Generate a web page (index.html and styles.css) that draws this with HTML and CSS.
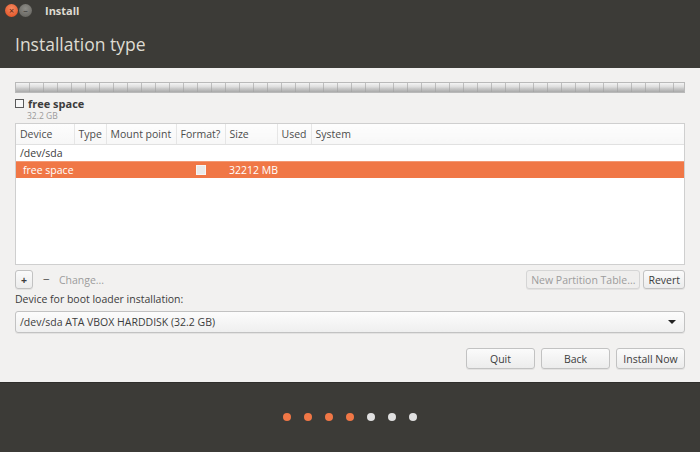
FILE: index.html
```html
<!DOCTYPE html>
<html lang="en">
<head>
    <meta charset="UTF-8">
    <title>Install</title>
    <link rel="stylesheet" href="styles.css">
</head>
<body>
    <div class="window">
        <header class="titlebar">
            <span class="wbtn close">&#215;</span>
            <span class="wbtn mini">&#8211;</span>
            <span class="wtitle">Install</span>
        </header>

        <div class="pagehead">Installation type</div>

        <main class="main">
            <div class="partbar"></div>

            <div class="legend">
                <div class="legend-name"><span class="box"></span>free space</div>
                <div class="legend-size">32.2 GB</div>
            </div>

            <div class="tablebox">
                <table class="parts">
                    <thead>
                        <tr>
                            <th class="c-dev">Device</th>
                            <th class="c-type">Type</th>
                            <th class="c-mount">Mount point</th>
                            <th class="c-fmt">Format?</th>
                            <th class="c-size">Size</th>
                            <th class="c-used">Used</th>
                            <th class="c-sys">System</th>
                        </tr>
                    </thead>
                    <tbody>
                        <tr>
                            <td>/dev/sda</td>
                            <td></td><td></td><td></td><td></td><td></td><td></td>
                        </tr>
                        <tr class="selected">
                            <td class="indent">free space</td>
                            <td></td>
                            <td></td>
                            <td class="fmt"><span class="fmtbox"></span></td>
                            <td>32212 MB</td>
                            <td></td>
                            <td></td>
                        </tr>
                    </tbody>
                </table>
            </div>

            <div class="toolbar">
                <button class="btn small">+</button>
                <span class="minus">&#8722;</span>
                <span class="change">Change...</span>
                <span class="spacer"></span>
                <button class="btn disabled">New Partition Table...</button>
                <button class="btn">Revert</button>
            </div>

            <div class="bootlabel">Device for boot loader installation:</div>
            <div class="combo">
                <span>/dev/sda ATA VBOX HARDDISK (32.2 GB)</span>
                <span class="arrow"></span>
            </div>

            <div class="actions">
                <button class="btn wide">Quit</button>
                <button class="btn wide">Back</button>
                <button class="btn wide">Install Now</button>
            </div>
        </main>

        <footer class="footer">
            <span class="dot on"></span>
            <span class="dot on"></span>
            <span class="dot on"></span>
            <span class="dot on"></span>
            <span class="dot"></span>
            <span class="dot"></span>
            <span class="dot"></span>
        </footer>
    </div>
</body>
</html>
```

FILE: styles.css
```css
* {
    margin: 0;
    padding: 0;
    box-sizing: border-box;
}

body {
    font-family: "Open Sans", "DejaVu Sans", sans-serif;
    font-size: 10.5px;
    color: #3c3c3c;
    background-color: #3c3b37;
}

.window {
    width: 700px;
    height: 452px;
    display: flex;
    flex-direction: column;
}

/* title bar */
.titlebar {
    height: 20px;
    display: flex;
    align-items: center;
    padding-left: 5px;
    background-color: #3c3b37;
}

.wbtn {
    width: 13px;
    height: 13px;
    border-radius: 50%;
    display: flex;
    align-items: center;
    justify-content: center;
    font-size: 9px;
    line-height: 1;
    margin-right: 1px;
}

.wbtn.close {
    background: radial-gradient(circle at 50% 35%, #f58a62, #df4a1b);
    color: #5a2410;
}

.wbtn.mini {
    background: radial-gradient(circle at 50% 35%, #8e8d88, #5f5e59);
    color: #3c3b37;
}

.wtitle {
    margin-left: 12px;
    color: #dfdbd2;
    font-weight: bold;
    font-size: 11px;
}

/* page header */
.pagehead {
    height: 48px;
    padding: 12px 0 0 15px;
    color: #dfdbd2;
    font-size: 17.5px;
    background-color: #3c3b37;
}

/* main area */
.main {
    height: 314px;
    background-color: #f2f1f0;
    padding: 14px 15px 0;
    display: flex;
    flex-direction: column;
}

.partbar {
    height: 11px;
    border: 1px solid #b9b9b9;
    background:
        repeating-linear-gradient(90deg, transparent 0, transparent 13px, rgba(160,160,160,0.6) 13px, rgba(160,160,160,0.6) 14px),
        linear-gradient(#f4f4f4, #dcdcdc 45%, #cfcfcf 55%, #a9a9a9);
}

.legend {
    margin-top: 4px;
    height: 26px;
}

.legend-name {
    display: flex;
    align-items: center;
    height: 13px;
    font-weight: bold;
    font-size: 11px;
    color: #3c3c3c;
    line-height: 13px;
}

.legend-name .box {
    width: 9px;
    height: 9px;
    border: 1px solid #5a5a5a;
    background-color: #f7f7f7;
    margin-right: 4px;
}

.legend-size {
    margin-top: 1px;
    padding-left: 12px;
    font-size: 8.5px;
    color: #9a9a9a;
    line-height: 10px;
}

.tablebox {
    height: 142px;
    background-color: #fff;
    border: 1px solid #cfcfcf;
}

.parts {
    width: 100%;
    border-collapse: collapse;
    table-layout: fixed;
}

.parts th {
    height: 20px;
    font-weight: normal;
    text-align: left;
    padding: 0 4px;
    white-space: nowrap;
    overflow: hidden;
    color: #4c4c4c;
    background: linear-gradient(#fdfdfd, #f7f7f7);
    border-bottom: 1px solid #e1e1e1;
    border-right: 1px solid #e6e6e6;
}

.parts th.c-sys {
    border-right: none;
}

.c-dev { width: 58px; }
.c-type { width: 32px; }
.c-mount { width: 70px; }
.c-fmt { width: 49px; }
.c-size { width: 52px; }
.c-used { width: 34px; }

.parts td {
    height: 17px;
    padding: 0 4px;
    color: #3c3c3c;
    white-space: nowrap;
}

.parts tr.selected td {
    background-color: #f07746;
    color: #fff;
    border-top: 1px solid #f39873;
}

.parts td.indent {
    padding-left: 7px;
}

.parts td.fmt {
    text-align: center;
    padding-top: 2px;
}

.fmtbox {
    display: inline-block;
    width: 10px;
    height: 10px;
    background-color: #eaeaea;
    border: 1px solid #f5f5f5;
}

/* toolbar under table */
.toolbar {
    margin-top: 5px;
    height: 19px;
    display: flex;
    align-items: center;
}

.btn {
    font-family: inherit;
    font-size: 10.5px;
    height: 19px;
    padding: 0 4px;
    color: #3c3c3c;
    border: 1px solid #c2c2c2;
    border-radius: 3px;
    background: linear-gradient(#fbfbfb, #ececec);
    box-shadow: 0 1px 0 rgba(0,0,0,0.06);
}

.btn.small {
    width: 18px;
    padding: 0;
    font-weight: bold;
}

.btn.disabled {
    color: #9c9c9c;
    background: #efeeed;
    border-color: #d5d5d5;
    margin-right: 3px;
}

.minus {
    margin-left: 10px;
    color: #555;
    font-size: 12px;
}

.change {
    margin-left: 9px;
    color: #9c9c9c;
}

.spacer {
    flex: 1;
}

.bootlabel {
    margin-top: 2px;
    height: 17px;
    line-height: 17px;
    color: #3c3c3c;
}

.combo {
    margin-top: 3px;
    height: 22px;
    display: flex;
    align-items: center;
    justify-content: space-between;
    padding: 0 8px 0 4px;
    border: 1px solid #c2c2c2;
    border-radius: 3px;
    background: linear-gradient(#fcfcfc, #efefef);
    box-shadow: 0 1px 0 rgba(0,0,0,0.06);
}

.combo .arrow {
    width: 0;
    height: 0;
    border-left: 4px solid transparent;
    border-right: 4px solid transparent;
    border-top: 4px solid #222;
}

.actions {
    margin-top: 15px;
    display: flex;
    justify-content: flex-end;
    gap: 6px;
}

.btn.wide {
    width: 69px;
    height: 21px;
}

/* footer dots */
.footer {
    flex: 1;
    background-color: #3c3b37;
    border-top: 1px solid #2f2e2b;
    display: flex;
    justify-content: center;
    align-items: center;
    gap: 13px;
    padding-bottom: 2px;
}

.dot {
    width: 8px;
    height: 8px;
    border-radius: 50%;
    background-color: #e0e0e0;
}

.dot.on {
    background-color: #f07746;
}
```
